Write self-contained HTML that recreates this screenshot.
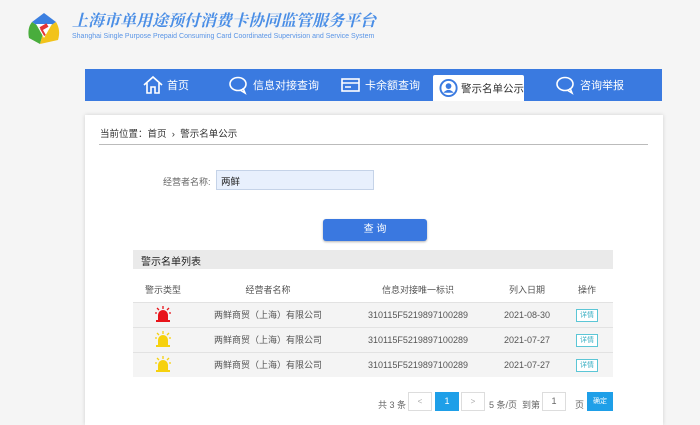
<!DOCTYPE html>
<html><head><meta charset="utf-8"><style>
*{margin:0;padding:0;box-sizing:border-box}
body{width:700px;height:418px;overflow:hidden;background:#f5f5f5;font-family:"Liberation Sans","Noto Sans CJK SC",sans-serif;position:relative;color:#333}
.abs{position:absolute}
.title{left:72px;top:10px;font-size:16px;line-height:20px;color:#4a8ee6;font-style:italic;font-weight:bold;letter-spacing:0;font-family:"Noto Serif CJK SC","Noto Sans CJK SC",serif;white-space:nowrap}
.sub{left:72px;top:33px;font-size:7px;color:#5a95e6;white-space:nowrap}
.nav{left:85px;top:69px;width:577px;height:32px;background:#3a7ae0}
.nav .it{position:absolute;top:0;height:32px;color:#fff;font-size:11px;display:flex;align-items:center;white-space:nowrap}
.nav .act{background:#fff;color:#333;top:6px;height:26px;border-radius:2px 2px 0 0;padding-left:6px;font-size:10.5px}
.card{left:85px;top:115px;width:578px;height:310px;background:#fff;box-shadow:0 0 4px rgba(0,0,0,.15)}
.t10{font-size:9.5px}
td{font-size:9px;color:#555;text-align:center;height:25px}
.btn{border:1px solid #5bc6d6;color:#3bb0c4;font-size:7px;padding:2px 3px;background:#fff}
</style></head><body>
<svg class="abs" style="left:26px;top:12px" width="36" height="34" viewBox="0 0 36 34">
<path d="M18 1 L30 10 L18 18 L6 10Z" fill="#3b7fe0"/>
<path d="M6 10 L18 18 L14 32 L3 26 Q1 16 6 10Z" fill="#49ad3c"/>
<path d="M30 10 L18 18 L14 32 L32 28 Q35 18 30 10Z" fill="#f2c31a"/>
<path d="M10 12 L26 12 L18 26Z" fill="#fff"/>
<rect x="14" y="13" width="8" height="4" fill="#e53434" transform="rotate(-30 18 15)"/>
<rect x="16" y="16" width="2" height="8" fill="#e53434" transform="rotate(-30 17 20)"/>
</svg>
<div class="abs title">上海市单用途预付消费卡协同监管服务平台</div>
<div class="abs sub">Shanghai Single Purpose Prepaid Consuming Card Coordinated Supervision and Service System</div>
<div class="abs nav">
 <div class="it" style="left:57px"><svg width="22" height="20" viewBox="0 0 22 20" fill="none" stroke="#fff" stroke-width="1.6"><path d="M2 10 L11 2 L20 10 M5 8 V18 H9 V12 H13 V18 H17 V8"/></svg>&nbsp;首页</div>
 <div class="it" style="left:143px"><svg width="22" height="20" viewBox="0 0 22 20" fill="none" stroke="#fff" stroke-width="1.6"><ellipse cx="10" cy="9" rx="8" ry="6.5"/><path d="M12 15 L17 18 L15 13"/></svg>&nbsp;信息对接查询</div>
 <div class="it" style="left:255px"><svg width="22" height="18" viewBox="0 0 22 18" fill="none" stroke="#fff" stroke-width="1.6"><rect x="2" y="3" width="17" height="12"/><path d="M2 7H19M5 11H11"/></svg>&nbsp;卡余额查询</div>
 <div class="it act" style="left:348px;width:91px"><svg width="20" height="20" viewBox="0 0 20 20"><circle cx="10" cy="10" r="8.5" fill="none" stroke="#3a7ae0" stroke-width="2"/><circle cx="10" cy="8" r="3" fill="#3a7ae0"/><path d="M4.5 15 Q10 9 15.5 15Z" fill="#3a7ae0"/></svg>&nbsp;警示名单公示</div>
 <div class="it" style="left:470px"><svg width="22" height="20" viewBox="0 0 22 20" fill="none" stroke="#fff" stroke-width="1.6"><ellipse cx="10" cy="9" rx="8" ry="6.5"/><path d="M12 15 L17 18 L15 13"/></svg>&nbsp;咨询举报</div>
</div>
<div class="abs card">
 <div class="abs t10" style="left:15px;top:11px">当前位置：首页 &nbsp;›&nbsp; 警示名单公示</div>
 <div class="abs" style="left:14px;top:29px;width:549px;height:1px;background:#bbb"></div>
 <div class="abs" style="left:78px;top:60px;font-size:9px;color:#666">经营者名称:</div>
 <div class="abs" style="left:131px;top:55px;width:158px;height:20px;background:#e8f0fd;border:1px solid #c5d3e8;font-size:9.5px;padding:3px 4px;color:#222">两鲜</div>
 <div class="abs" style="left:238px;top:104px;width:104px;height:22px;background:#3a78e0;border-radius:3px;color:#fff;font-size:10px;text-align:center;line-height:22px;box-shadow:0 1px 2px rgba(0,0,0,.3)">查 询</div>
 <div class="abs" style="left:48px;top:135px;width:480px;height:19px;background:#eaeaea;font-size:10px;padding:3px 0 0 8px;color:#222">警示名单列表</div>
 <table class="abs" style="left:48px;top:162px;width:480px;border-collapse:collapse">
  <tr style="height:22px"><td style="width:60px;height:22px">警示类型</td><td style="width:150px">经营者名称</td><td style="width:150px">信息对接唯一标识</td><td style="width:68px">列入日期</td><td>操作</td></tr>
  <tr style="background:#f4f4f4;border-top:1px solid #e2e2e2"><td><svg width="18" height="16" viewBox="0 0 18 16"><path d="M4 14V9a5 5 0 0110 0v5Z M2 14H16V16H2Z" fill="#e8141a"/><path d="M9 0V3M3 2L5 4M15 2L13 4M1 7H3M15 7H17" stroke="#e8141a" stroke-width="1.3"/></svg></td><td>两鲜商贸（上海）有限公司</td><td>310115F5219897100289</td><td>2021-08-30</td><td><span class="btn">详情</span></td></tr>
  <tr style="background:#f4f4f4;border-top:1px solid #e2e2e2"><td><svg width="18" height="16" viewBox="0 0 18 16"><path d="M4 14V9a5 5 0 0110 0v5Z M2 14H16V16H2Z" fill="#f6d10e"/><path d="M9 0V3M3 2L5 4M15 2L13 4M1 7H3M15 7H17" stroke="#f6d10e" stroke-width="1.3"/></svg></td><td>两鲜商贸（上海）有限公司</td><td>310115F5219897100289</td><td>2021-07-27</td><td><span class="btn">详情</span></td></tr>
  <tr style="background:#f4f4f4;border-top:1px solid #e2e2e2"><td><svg width="18" height="16" viewBox="0 0 18 16"><path d="M4 14V9a5 5 0 0110 0v5Z M2 14H16V16H2Z" fill="#f6d10e"/><path d="M9 0V3M3 2L5 4M15 2L13 4M1 7H3M15 7H17" stroke="#f6d10e" stroke-width="1.3"/></svg></td><td>两鲜商贸（上海）有限公司</td><td>310115F5219897100289</td><td>2021-07-27</td><td><span class="btn">详情</span></td></tr>
 </table>
 <div class="abs" style="left:293px;top:283px;font-size:9px;color:#666">共 3 条</div>
 <div class="abs" style="left:323px;top:277px;width:24px;height:19px;border:1px solid #ddd;font-size:8px;color:#aaa;text-align:center;line-height:17px">&lt;</div>
 <div class="abs" style="left:350px;top:277px;width:24px;height:19px;background:#1e9fe8;color:#fff;font-size:9px;text-align:center;line-height:19px">1</div>
 <div class="abs" style="left:376px;top:277px;width:24px;height:19px;border:1px solid #ddd;font-size:8px;color:#aaa;text-align:center;line-height:17px">&gt;</div>
 <div class="abs" style="left:404px;top:283px;font-size:9px;color:#666">5 条/页 &nbsp;到第</div>
 <div class="abs" style="left:457px;top:277px;width:24px;height:19px;border:1px solid #ddd;font-size:9px;color:#666;text-align:center;line-height:17px">1</div>
 <div class="abs" style="left:490px;top:283px;font-size:9px;color:#666">页</div>
 <div class="abs" style="left:502px;top:277px;width:26px;height:19px;background:#1e9fe8;color:#fff;font-size:7px;text-align:center;line-height:19px">确定</div>
</div>
</body></html>
